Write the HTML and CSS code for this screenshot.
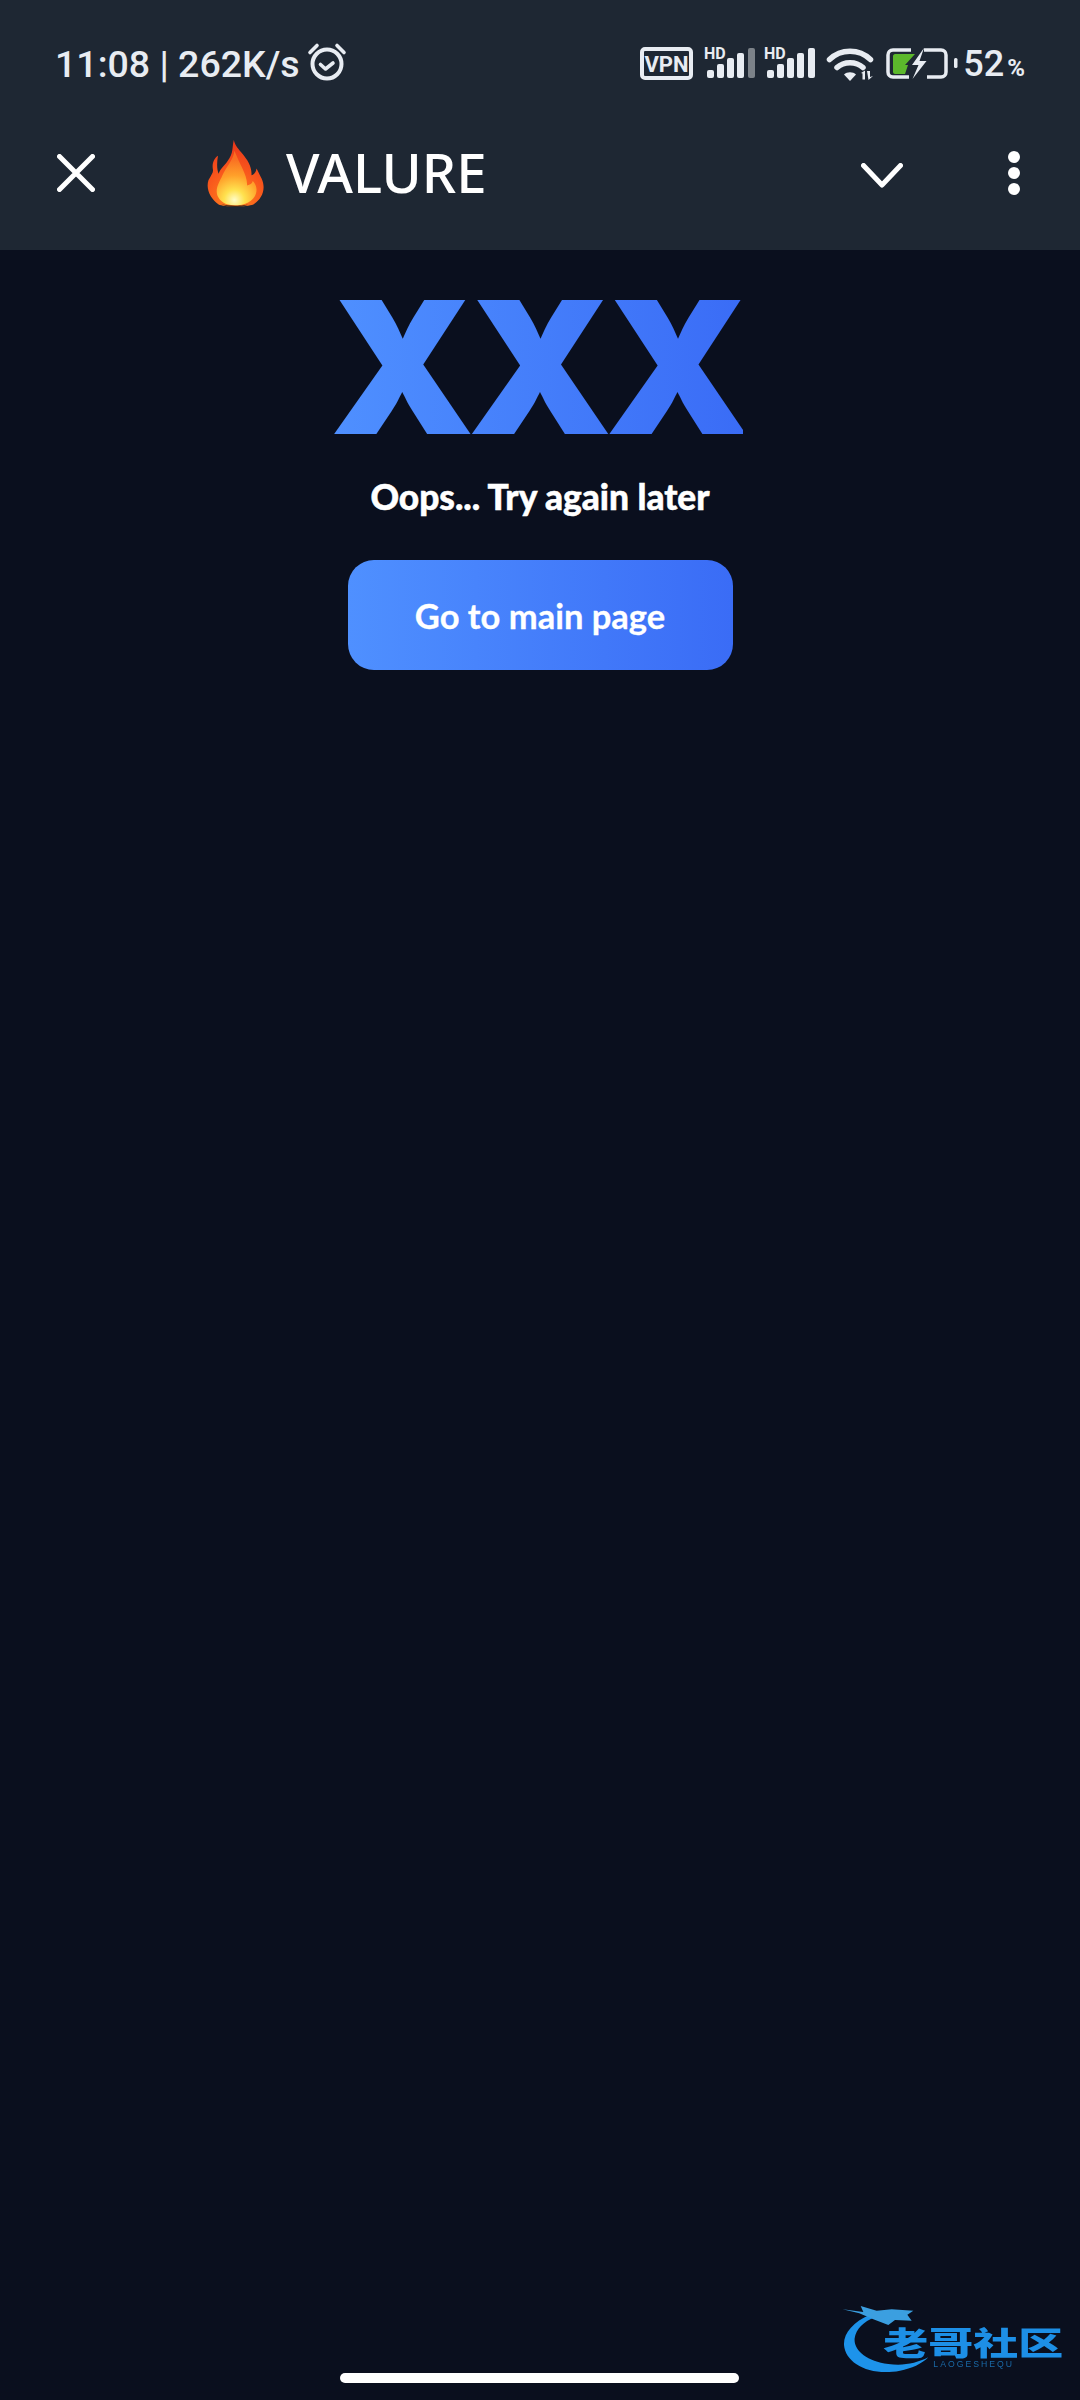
FILE: index.html
```html
<!DOCTYPE html>
<html lang="en">
<head>
  <meta charset="UTF-8">
  <title>VALURE</title>
  <meta name="viewport" content="width=device-width, initial-scale=1.0">
  <link rel="stylesheet" href="styles.css">
</head>
<body>
  <div id="screen">
    <header id="top-bar">
      <div class="status-bar">
        <div class="status-left">
          <span class="status-time">11:08 | 262K/s</span>
          <svg class="alarm-icon" viewBox="0 0 40 40" fill="none" stroke="#e8ecf2">
            <circle cx="20" cy="22" r="14.500" stroke-width="4"/>
            <path d="M13.500 22.500l5 4.500 7.500-6" stroke-width="3.600" stroke-linecap="round" stroke-linejoin="round"/>
            <path d="M3 10.500L10 3.500M37 10.500L30 3.500" stroke-width="3.600" stroke-linecap="round"/>
          </svg>
        </div>
        <div class="status-right">
          <!-- VPN, two signals, wifi and battery; coordinates are px from the group's corner -->
          <svg class="status-icons" viewBox="0 0 320 48" fill="#e8ecf2">
            <rect x="2" y="9" width="49" height="29" rx="3" fill="none" stroke="#e8ecf2" stroke-width="4"/>
            <text class="icon-vpn" x="26.500" y="31.500" text-anchor="middle">VPN</text>

            <text class="icon-hd" x="64" y="19">HD</text>
            <rect x="67" y="30" width="7" height="8" rx="2"/>
            <rect x="77" y="24" width="7" height="14" rx="2"/>
            <rect x="87" y="18" width="7" height="20" rx="2"/>
            <rect x="97" y="13" width="7" height="25" rx="2"/>
            <rect x="108" y="8" width="7" height="30" rx="2" fill="#7c8289"/>

            <text class="icon-hd" x="124" y="19">HD</text>
            <rect x="127" y="30" width="7" height="8" rx="2"/>
            <rect x="137" y="24" width="7" height="14" rx="2"/>
            <rect x="147" y="18" width="7" height="20" rx="2"/>
            <rect x="157" y="13" width="7" height="25" rx="2"/>
            <rect x="168" y="8" width="7" height="30" rx="2"/>

            <g fill="none" stroke="#e8ecf2" stroke-width="5.500" stroke-linecap="round">
              <path d="M189.500 19.500C201 8.500 219 8.500 230.500 19.500"/>
              <path d="M197 27.500C204 21 216 21 223 27.500"/>
            </g>
            <path d="M204 34.500C207 31.500 213 31.500 216 34.500L210 41z"/>
            <path d="M221 33l4-2.500v9h-2.500v-6zM227 31h3v6l3-1-4.500 4z"/>

            <path d="M271 10h-18c-3 0-5 2-5 5v17c0 3 2 5 5 5h16M287 37h14c3 0 5-2 5-5V15c0-3-2-5-5-5h-17" fill="none" stroke="#e8ecf2" stroke-width="3.500"/>
            <path d="M255 14h20l-10 11h3l-3 9h-10c-1 0-2-1-2-2V16c0-1 1-2 2-2z" fill="#5cb82c"/>
            <path d="M284 8l-12 17h6.500l-6 14 14-18h-7z"/>
            <rect x="314" y="18" width="3.500" height="10" rx="1.500"/>
          </svg>
          <span class="battery-level">52<small>%</small></span>
        </div>
      </div>
      <div class="toolbar">
        <svg class="close-icon" viewBox="0 0 38 38" fill="none" stroke="#fff" stroke-width="5" stroke-linecap="round">
          <path d="M2.500 2.500l33 33M35.500 2.500l-33 33"/>
        </svg>
        <svg class="flame-icon" viewBox="40 30 190 225">
          <defs>
            <radialGradient id="flameOuter" gradientUnits="userSpaceOnUse" cx="130" cy="225" r="190">
              <stop offset="0" stop-color="#ff8a1e"/>
              <stop offset="0.5" stop-color="#f8561c"/>
              <stop offset="1" stop-color="#e8331a"/>
            </radialGradient>
            <radialGradient id="flameInner" gradientUnits="userSpaceOnUse" cx="130" cy="228" r="130">
              <stop offset="0" stop-color="#fffcc8"/>
              <stop offset="0.25" stop-color="#ffe14e"/>
              <stop offset="0.6" stop-color="#ffa02a"/>
              <stop offset="1" stop-color="#f96f22"/>
            </radialGradient>
          </defs>
          <path fill="url(#flameOuter)" d="M128 38C122 62 128 80 108 105C98 120 84 130 80 145C74 130 74 110 78 88C66 96 58 112 62 132C64 140 56 150 48 165C38 195 56 226 80 242C95 250 170 250 190 242C216 226 232 195 216 160C210 148 204 136 200 128C198 140 192 148 184 150C186 120 170 100 156 82C144 68 132 56 128 38Z"/>
          <path fill="url(#flameInner)" d="M130 72C128 100 104 122 92 150C84 170 68 190 76 214C84 232 100 245 130 245C164 245 190 232 198 208C204 190 196 176 188 168C186 176 180 180 170 182C172 150 144 110 130 72Z"/>
          <path fill="#3a2418" d="M88 241C110 253 155 253 178 241C160 248 106 248 88 241Z"/>
        </svg>
        <span class="toolbar-title">VALURE</span>
        <svg class="chevron-icon" viewBox="0 0 42 25" fill="none" stroke="#fff" stroke-width="5" stroke-linecap="round" stroke-linejoin="round">
          <path d="M2.500 2.500L21 22 39.500 2.500"/>
        </svg>
        <div class="more-dots"><i></i><i></i><i></i></div>
      </div>
    </header>

    <main id="error-page">
      <div class="error-logo">XXX</div>
      <p class="error-text">Oops... Try again later</p>
      <button class="home-btn">Go to main page</button>
    </main>

    <!-- Watermark stamped over the screenshot -->
    <svg class="watermark" viewBox="0 0 780 360">
      <path fill="#1d93ea" d="M150 104C100 125 70 160 72 195C76 250 150 290 240 272C275 266 305 252 325 232C290 250 250 258 205 252C140 244 100 210 104 175C108 148 130 125 165 112Z"/>
      <path fill="#3b9fe0" d="M68 88L130 96L122 78L170 92L215 88L280 92L262 104L275 122L225 120L205 135L160 118L118 100Z"/>
      <text class="wm-title" x="0" y="0" transform="translate(190 226) scale(1 .72)">老哥社区</text>
      <text class="wm-sub" x="340" y="262">LAOGESHEQU</text>
    </svg>
    <div class="home-indicator"></div>
  </div>
</body>
</html>
```
FILE: styles.css
```css
html, body {
  margin: 0;
  padding: 0;
  width: 1080px;
  height: 2400px;
  overflow: hidden;
  background: #0a0f1e;
}
#screen {
  position: relative;
  display: flex;
  flex-direction: column;
  width: 1080px;
  height: 2400px;
  font-family: "Noto Sans", Roboto, sans-serif;
  color: #fff;
}

/* Status bar + app toolbar */
#top-bar {
  background: #1e2733;
  height: 250px;
  flex-shrink: 0;
}
.status-bar {
  display: flex;
  align-items: center;
  justify-content: space-between;
  box-sizing: border-box;
  height: 84px;
  padding: 44px 55px 0 55px;
  color: #e8ecf2;
}
.status-left {
  display: flex;
  align-items: center;
  gap: 7px;
}
.status-time {
  font-family: Roboto, sans-serif;
  font-size: 37.500px;
  font-weight: 500;
  line-height: 40px;
  white-space: nowrap;
}
.alarm-icon {
  width: 40px;
  height: 40px;
  margin-top: -4px;
}
.status-right {
  display: flex;
  align-items: center;
  gap: 3px;
}
.status-icons {
  width: 320px;
  height: 48px;
}
.icon-vpn {
  font-family: Roboto, sans-serif;
  font-weight: 700;
  font-size: 22px;
}
.icon-hd {
  font-family: Roboto, sans-serif;
  font-weight: 700;
  font-size: 16px;
}
.battery-level {
  margin-top: 3px;
  font-family: Roboto, sans-serif;
  font-size: 36px;
  font-weight: 500;
  line-height: 40px;
}
.battery-level small {
  font-size: 24px;
  font-weight: 700;
  margin-left: 3px;
}

.toolbar {
  display: flex;
  align-items: center;
  box-sizing: border-box;
  height: 166px;
  padding: 12px 60px 0 57px;
}
.close-icon {
  width: 38px;
  height: 38px;
}
.flame-icon {
  width: 60px;
  height: 72px;
  margin-left: 111px;
}
.toolbar-title {
  margin: -2px 0 0 20px;
  font-size: 54.500px;
  font-weight: 500;
  line-height: 60px;
}
.chevron-icon {
  width: 42px;
  height: 25px;
  margin-left: auto;
  margin-top: 4px;
}
.more-dots {
  display: flex;
  flex-direction: column;
  gap: 4px;
  margin-left: 105px;
}
.more-dots i {
  display: block;
  width: 12px;
  height: 12px;
  border-radius: 50%;
  background: #fff;
}

/* Error content */
#error-page {
  display: flex;
  flex-direction: column;
  align-items: center;
  padding-top: 22px;
}
.error-logo {
  font-family: Inter, sans-serif;
  font-weight: 900;
  font-size: 184px;
  line-height: 190px;
  letter-spacing: -7px;
  margin-right: 7px;
  background: linear-gradient(90deg, #4f90ff, #3a6cf6);
  -webkit-background-clip: text;
  background-clip: text;
  color: transparent;
}
.error-text {
  margin: 15px 0 0 0;
  font-family: Lato, sans-serif;
  font-weight: 900;
  font-size: 35.300px;
  line-height: 40px;
  -webkit-text-stroke: 0.5px #fff;
}
.home-btn {
  width: 385px;
  height: 110px;
  margin-top: 43px;
  padding: 0;
  border: 0;
  border-radius: 26px;
  background: linear-gradient(90deg, #4f90ff, #3a6cf6);
  color: #fff;
  font-family: Lato, sans-serif;
  font-weight: 700;
  font-size: 34.500px;
  -webkit-text-stroke: 0.3px #fff;
}

/* Overlays */
.watermark {
  position: absolute;
  left: 820px;
  top: 2280px;
  width: 260px;
  height: 120px;
  filter: blur(0.6px);
}
.wm-title {
  font-family: "Noto Sans CJK SC", sans-serif;
  font-weight: 900;
  font-size: 135px;
  fill: #1d8fe6;
}
.wm-sub {
  font-family: "Liberation Sans", sans-serif;
  font-size: 26px;
  letter-spacing: 6px;
  fill: #1a6aa8;
}
.home-indicator {
  position: absolute;
  left: 340px;
  top: 2373px;
  width: 399px;
  height: 10px;
  border-radius: 5px;
  background: #fff;
}
```
